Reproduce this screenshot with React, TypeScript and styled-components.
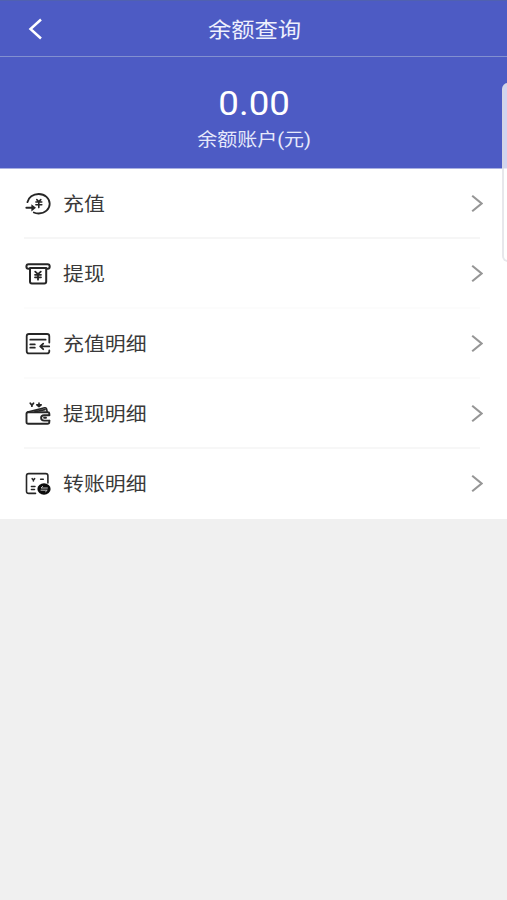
import React from 'react';
import styled, { createGlobalStyle } from 'styled-components';

const GlobalStyle = createGlobalStyle`
  * { box-sizing: border-box; }
  body {
    margin: 0;
    background: #f0f0f0;
    font-family: Roboto, "Noto Sans CJK SC", sans-serif;
    overflow: hidden;
  }
`;

const Page = styled.div`
  position: relative;
  width: 100%;
  height: 900px;
  overflow: hidden;
  background: #f0f0f0;
`;

const Header = styled.header`
  display: grid;
  grid-template-columns: 60px 1fr 60px;
  align-items: center;
  height: 57px;
  padding-top: 1px;
  background: #4d5bc4;
  border-top: 1px solid #5061b0;
  border-bottom: 1px solid #8290d0;
`;

const BackButton = styled.button`
  display: flex;
  height: 30px;
  padding: 0 0 0 27px;
  align-items: center;
  border: 0;
  background: none;
`;

const Title = styled.h1`
  margin: 0;
  padding-top: 1px;
  text-align: center;
  font-size: 21px;
  font-weight: 400;
  line-height: 30px;
  color: #eef0fd;
  transform: translateX(1px) scaleX(1.11);
`;

const Balance = styled.section`
  display: flex;
  flex-direction: column;
  align-items: center;
  height: 112px;
  padding: 26px 0 0 2px;
  background: #4d5bc4;
  border-bottom: 1px solid #a9b0e2;
`;

const Amount = styled.div`
  font-family: Roboto, sans-serif;
  font-size: 34px;
  line-height: 40px;
  color: #fff;
  transform: scaleX(1.08);
`;

const Caption = styled.div`
  font-size: 18px;
  line-height: 28px;
  margin-top: 3px;
  color: #e6e9fb;
  transform: scaleX(1.11);
`;

const Menu = styled.nav`
  height: 350px;
  background: #fff;
`;

const Row = styled.div<{ $line: string }>`
  display: flex;
  align-items: center;
  height: 70px;
  margin: 0 24px;
  background: linear-gradient(${(p) => p.$line}, ${(p) => p.$line}) 0 68px / 456px 2px no-repeat;
`;

const RowIcon = styled.svg`
  flex: none;
  width: 28px;
  height: 28px;
  fill: none;
  stroke: #262626;
  stroke-width: 2;
  stroke-linecap: round;
  stroke-linejoin: round;
`;

const Label = styled.span`
  flex: 1;
  margin-left: 11px;
  padding-top: 1px;
  font-size: 19px;
  line-height: 28px;
  color: #3a3a3a;
  transform: scaleX(1.1);
  transform-origin: left center;
`;

const Chevron = styled.svg`
  flex: none;
  width: 12px;
  height: 18px;
  fill: none;
  stroke: #969696;
  stroke-width: 2.1;
`;

const EdgeHandle = styled.div`
  position: absolute;
  top: 83px;
  right: -9px;
  width: 14px;
  height: 179px;
  border: 2px solid rgba(215, 215, 222, 0.6);
  border-radius: 6px;
  background: rgba(255, 255, 255, 0.74);
`;

const TopUpIcon = () => (
  <RowIcon viewBox="0 0 28 28">
    <path d="M3.4 12.2C4.4 7.5 9 4 14.7 4C20.9 4 25.7 8.4 25.7 13.8C25.7 19.2 20.9 23.5 14.7 23.5C12.9 23.5 11.3 23.2 9.8 22.5" strokeWidth="1.8" />
    <path d="M2.4 17.8H8" strokeWidth="2" />
    <path d="M7.4 14.2L12 17.8L7.4 21.4Z" fill="#262626" stroke="none" />
    <path d="M12.8 9.6L14.8 11.6L16.8 9.6M11.9 12H17.8M11.9 14.8H17.8M14.8 11.6V17.6" strokeWidth="1.6" />
  </RowIcon>
);

const WithdrawIcon = () => (
  <RowIcon viewBox="0 0 28 28">
    <path d="M5 8.8H4.4C2.9 8.8 2.4 8 2.4 6.6C2.4 5 3 4.2 4.6 4.2H23.6C25.2 4.2 25.7 5 25.7 6.6C25.7 8 25.2 8.8 23.8 8.8H23" />
    <path d="M6 8H22.2V21.6C22.2 22.9 21.6 23.6 20.3 23.6H7.9C6.6 23.6 6 22.9 6 21.6Z" />
    <path d="M11.2 11.6L14 14.2L16.8 11.6M11 14.8H17M11 17.3H17M14 14.2V19.7" strokeWidth="1.8" />
  </RowIcon>
);

const TopUpListIcon = () => (
  <RowIcon viewBox="0 0 28 28">
    <path d="M25.3 12.6V6.2C25.3 4.8 24.6 4 23 4H5C3.4 4 2.7 4.8 2.7 6.2V21.2C2.7 22.7 3.4 23.4 5 23.4H23C24.6 23.4 25.3 22.7 25.3 21.2V20.4" strokeWidth="1.8" />
    <path d="M6.3 9.7H21.6M6.3 14.4H10.8M6.3 17.7H10.8M16.4 16.4H25.2M19.2 13.6L16.2 16.4L19.2 19.2" strokeWidth="1.8" />
  </RowIcon>
);

const WithdrawListIcon = () => (
  <RowIcon viewBox="0 0 28 28">
    <path d="M25.3 15V13.6C25.3 12.6 24.8 12.2 23.8 12.2H4.2C3 12.2 2.5 12.8 2.5 13.8V22C2.5 23.2 3.1 23.8 4.3 23.8H23.4C24.7 23.8 25.3 23.2 25.3 22V20.8" strokeWidth="1.9" />
    <path d="M3.6 12L20.6 7.8C21.8 7.5 22.4 8.2 22.6 9L23.2 12M11 11.8L21 9.6" strokeWidth="1.6" />
    <path d="M25.4 15.2H20.2C18.3 15.2 17.1 16.3 17.1 17.8C17.1 19.4 18.3 20.6 20.2 20.6H25.4M20.1 17.8H22" strokeWidth="1.9" />
    <path d="M6.3 3.2L7.9 5.2L9.5 3.2M7.9 5.2V6.2" strokeWidth="1.8" />
    <path d="M15 3V6.2M12.8 4.8H17.2L15 6.6Z" fill="#262626" strokeWidth="1.6" />
  </RowIcon>
);

const TransferListIcon = () => (
  <RowIcon viewBox="0 0 28 28">
    <path d="M11.5 23.4H4.8C3.2 23.4 2.5 22.7 2.5 21.2V5.8C2.5 4.3 3.2 3.6 4.8 3.6H21.7C23.2 3.6 23.9 4.3 23.9 5.8V13" strokeWidth="1.6" />
    <path d="M8.2 8.7L9.4 10.1L10.6 8.7M9.4 10.1V10.9" strokeWidth="1.6" />
    <path d="M16.6 9.3H19.3M7.4 16.5H11M7.4 19.5H10.5" strokeWidth="1.5" />
    <ellipse cx="20" cy="19" rx="6.6" ry="5.8" fill="#0c0c0c" stroke="none" />
    <path d="M23.4 18H17L18.6 16.4M17 20.2H23.2L21.6 21.7" stroke="#c4c4c4" strokeWidth="1" />
  </RowIcon>
);

const items = [
  { label: '充值', Icon: TopUpIcon, line: '#f6f6f6' },
  { label: '提现', Icon: WithdrawIcon, line: '#fcfcfc' },
  { label: '充值明细', Icon: TopUpListIcon, line: '#fbfbfb' },
  { label: '提现明细', Icon: WithdrawListIcon, line: '#f7f7f7' },
  { label: '转账明细', Icon: TransferListIcon, line: 'transparent' },
];

export default function App() {
  return (
    <Page>
      <GlobalStyle />
      <Header>
        <BackButton aria-label="返回">
          <svg width="16" height="22" viewBox="0 0 16 22" fill="none" stroke="#fff" strokeWidth="2.5">
            <path d="M14 1.5L3.5 11L14 20.5" />
          </svg>
        </BackButton>
        <Title>余额查询</Title>
      </Header>
      <Balance>
        <Amount>0.00</Amount>
        <Caption>余额账户(元)</Caption>
      </Balance>
      <Menu>
        {items.map(({ label, Icon, line }) => (
          <Row key={label} $line={line}>
            <Icon />
            <Label>{label}</Label>
            <Chevron viewBox="0 0 12 18">
              <path d="M1.2 0.8L10.6 8.5L1.2 16.2" />
            </Chevron>
          </Row>
        ))}
      </Menu>
      <EdgeHandle />
    </Page>
  );
}
